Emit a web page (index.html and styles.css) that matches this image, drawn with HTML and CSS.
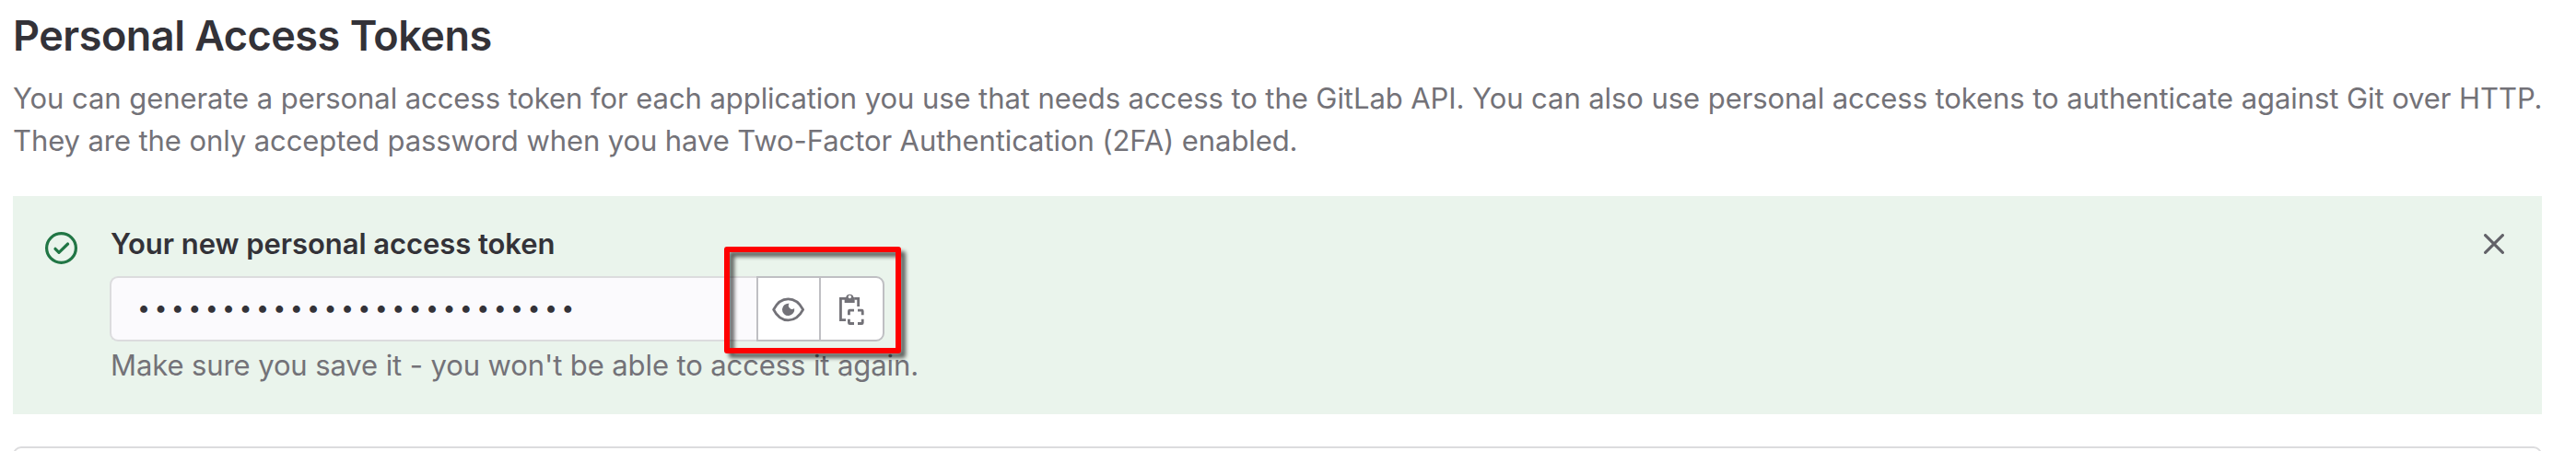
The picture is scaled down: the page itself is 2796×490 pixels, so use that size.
FILE: index.html
```html
<!DOCTYPE html>
<html lang="en">
<head>
<meta charset="utf-8">
<title>Personal Access Tokens</title>
<link rel="stylesheet" href="styles.css">
</head>
<body>
<main class="page">
  <h1 class="title"><span>Personal Access Tokens</span></h1>
  <p class="intro"><span class="intro-a">You can generate a personal access token for each application you use that needs access to the GitLab API. You can also use personal access tokens to authenticate against Git over HTTP.</span><br><span class="intro-b">They are the only accepted password when you have Two-Factor Authentication (2FA) enabled.</span></p>
  <section class="alert">
    <svg class="alert-icon" viewBox="0 0 35 35" fill="none" stroke="#217645" stroke-width="3.2">
      <circle cx="17.5" cy="17.5" r="15.9"/>
      <path d="M11 18.3l4 4L24.6 13" stroke-linecap="round" stroke-linejoin="round"/>
    </svg>
    <div class="alert-body">
      <h2 class="label"><span>Your new personal access token</span></h2>
      <div class="field">
        <div class="token"><span class="dots">••••••••••••••••••••••••••</span></div>
        <button class="btn" aria-label="Reveal token">
          <svg class="eye" viewBox="237 214 106 84">
            <path d="M242 257C265 211 314 211 338 257C314 303 265 303 242 257Z" fill="none" stroke="#737278" stroke-width="8.5" stroke-linejoin="round"/>
            <path d="M293 237.3A11.5 11.5 0 0 0 309.5 253A20 20 0 1 1 293 237.3Z" fill="#737278"/>
          </svg>
        </button>
        <button class="btn btn-last" aria-label="Copy token">
          <svg class="clip" viewBox="453 204 81 106" fill="none" stroke="#737278" stroke-width="8.5">
            <path d="M472 223.3H457.3V293H474M502 223.3H515V249"/>
            <path d="M470 219H474.5A13 13 0 0 1 499.500 219H503V237H470ZM487 212.500A5 5 0 1 0 487 222.500A5 5 0 1 0 487 212.500Z" fill="#737278" fill-rule="evenodd" stroke="none"/>
            <path d="M484.300 277V264Q484.300 261.300 487 261.300H501M513 261.300H526Q528.700 261.300 528.700 264V277M528.700 290V302Q528.700 304.700 526 304.700H513M501 304.700H487Q484.300 304.700 484.300 302V290"/>
          </svg>
        </button>
        <div class="highlight"></div>
      </div>
      <p class="note"><span>Make sure you save it - you won't be able to access it again.</span></p>
    </div>
    <svg class="close" viewBox="0 0 22 22" fill="none" stroke="#626168" stroke-width="3.1" stroke-linecap="round"><path d="M1.600 1.600L20.400 20.400M20.400 1.600L1.600 20.400"/></svg>
  </section>
  <section class="card"></section>
</main>
</body>
</html>
```
FILE: styles.css
```css
* { box-sizing: border-box; }
body { margin: 0; background: #fff; font-family: Inter, "Liberation Sans", sans-serif; font-size: 31px; color: #333238; }
.page { height: 490px; overflow: hidden; padding: 10px 37px 0 14px; }
h1, h2, p { margin: 0; white-space: nowrap; }
.title { height: 74px; line-height: 58px; font-size: 45px; font-weight: 600; letter-spacing: -.5px; }
.intro { height: 129px; line-height: 46px; color: #737278; }
.intro-a { letter-spacing: -.07px; }
.intro-b { letter-spacing: -.085px; }
.alert { display: flex; align-items: flex-start; height: 237px; padding: 39px 41px 0 35px; background: #eaf4ec; }
.alert-icon { width: 35px; height: 35px; flex: none; }
.alert-body { flex: 1; margin-left: 35px; }
.label { height: 48px; line-height: 26px; font-size: 31px; font-weight: 600; padding-left: 1px; letter-spacing: -.06px; }
.field { position: relative; display: flex; width: 841px; height: 71px; }
.token { width: 702px; border: 2px solid #dcdcde; border-right: 0; border-radius: 9px 0 0 9px; background: #fbfafd; padding-left: 28px; line-height: 60px; overflow: hidden; white-space: nowrap; }
.dots { font-size: 25px; letter-spacing: 4.35px; }
.btn { display: flex; align-items: center; justify-content: center; width: 70px; height: 71px; margin: 0; padding: 0; border: 2px solid #bfbfc3; background: #fff; }
.btn-last { width: 71px; margin-left: -2px; border-radius: 0 9px 9px 0; }
.eye { width: 35.300px; height: 28px; }
.clip { width: 27px; height: 35.300px; }
.highlight { position: absolute; left: 667px; top: -32px; width: 192px; height: 116px; border: 6px solid #f00; border-radius: 3px; filter: drop-shadow(5px 5px 2px rgba(0, 0, 0, .6)); }
.note { padding-left: 1px; margin-top: 1px; line-height: 50px; color: #737278; letter-spacing: -.1px; }
.close { width: 22px; height: 22px; flex: none; margin-top: 2px; }
.card { height: 60px; margin-top: 35px; border: 2px solid #dcdcde; border-radius: 9px; }
```
